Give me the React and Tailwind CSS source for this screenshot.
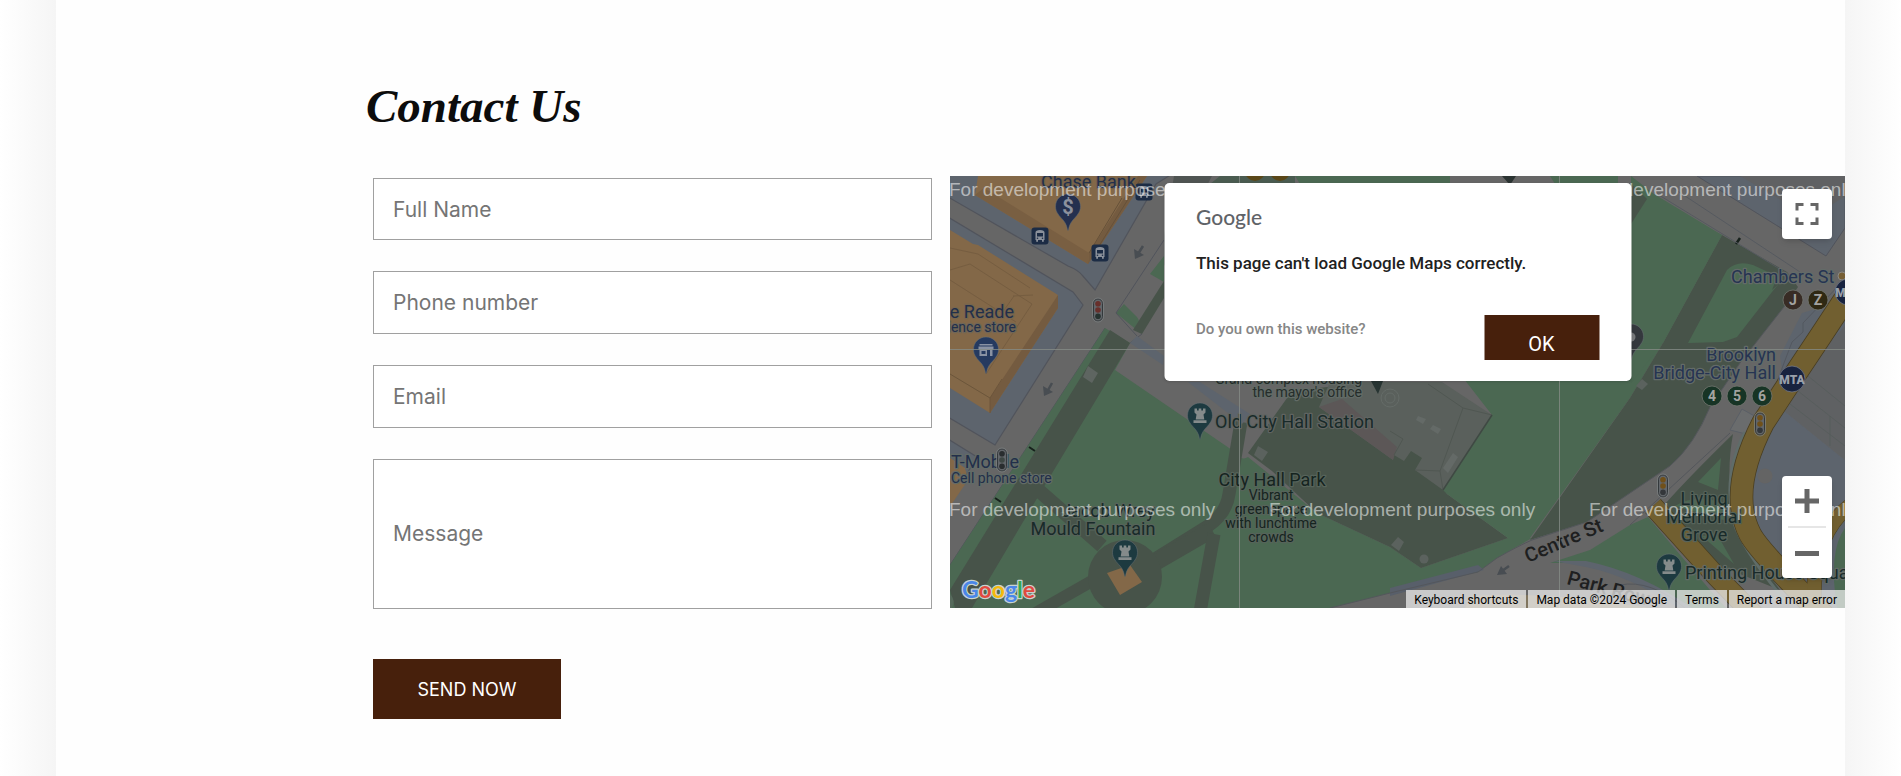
import React from "react";

const FIELD =
  "block w-full border border-[#a0a0a0] bg-white px-[19px] font-[Inter,sans-serif] text-[21px] text-[#333] placeholder:text-[#757575] outline-none focus:border-[#47200c]";

function Pin({ x, y, color, children }) {
  return (
    <g transform={`translate(${x} ${y})`}>
      <path
        d="M0-13C-7.2-13-12.5-7.4-12.5-.6-12.5 5.5-8.4 9-4.8 13.2-2.4 16-1 19.5-.6 22.6-.4 23.8.4 23.8.6 22.6 1 19.500 2.400 16 4.800 13.200 8.400 9 12.500 5.500 12.500-.6 12.500-7.400 7.200-13 0-13Z"
        fill={color}
        stroke="#6b7276"
        strokeWidth="0.5"
      />
      {children}
    </g>
  );
}

function Rook({ x, y }) {
  return (
    <Pin x={x} y={y} color="#1d3a40">
      <path
        d="M-5.500-7.500h2.500v2h1.700v-2h2.600v2H3v-2h2.500v4L3.500-1.500 4.300 3.500H-4.300L-3.500-1.500-5.500-3.500ZM-6.500 4.300h13v2.700h-13Z"
        fill="#848b8b"
      />
    </Pin>
  );
}

function Bus({ x, y }) {
  return (
    <g transform={`translate(${x} ${y})`}>
      <rect x="-8.500" y="-8.500" width="17" height="17" rx="3" fill="#1c2c45" />
      <path
        d="M-4.500-3.500Q-4.500-6 0-6T4.500-3.500V4H3.800V5.800H2V4H-2V5.800H-3.800V4H-4.500Z"
        fill="#8b919b"
      />
      <rect x="-3" y="-3" width="6" height="3.500" fill="#1c2c45" />
      <circle cx="-2.500" cy="2.200" r=".8" fill="#1c2c45" />
      <circle cx="2.500" cy="2.200" r=".8" fill="#1c2c45" />
    </g>
  );
}

function Signal({ x, y, colors }) {
  return (
    <g transform={`translate(${x} ${y})`}>
      <rect x="-4.500" y="-11" width="9" height="22" rx="4.500" fill="#62666a" stroke="#34393c" />
      <rect x="-5.500" y="-12" width="11" height="24" rx="5.500" fill="none" stroke="#7d8284" strokeWidth=".7" />
      {colors.map((c, i) => (
        <circle key={i} cx="0" cy={(i - 1) * 6.3} r="2.800" fill={c} />
      ))}
    </g>
  );
}

function Line({ x, y, color, label }) {
  return (
    <g>
      <circle cx={x} cy={y} r="10" fill={color} stroke="#71756f" strokeWidth=".8" />
      <text x={x} y={y + 5} textAnchor="middle" fontSize="14" fontWeight="700" fill="#a3a3a0">
        {label}
      </text>
    </g>
  );
}

function Mta({ x, y }) {
  return (
    <g>
      <circle cx={x} cy={y} r="13" fill="#18233f" stroke="#737985" strokeWidth=".8" />
      <text x={x} y={y + 5} textAnchor="middle" fontSize="12" fontWeight="900" fill="#9aa0ab">
        MTA
      </text>
    </g>
  );
}

function Label({ x, y, size = 18, color = "#1d2f36", halo = "#626b66", anchor = "start", children }) {
  return (
    <text
      x={x}
      y={y}
      fontSize={size}
      fill={color}
      stroke={halo}
      strokeWidth="2.500"
      strokeLinejoin="round"
      paintOrder="stroke"
      textAnchor={anchor}
    >
      {children}
    </text>
  );
}

const NAVY = "#222f4a";
const PARK = "#182a29";
const TRANSIT = "#263452";

function MapCanvas() {
  return (
    <svg
      className="absolute inset-0 h-full w-full font-[Roboto,sans-serif]"
      viewBox="0 0 895 432"
      preserveAspectRatio="xMinYMin slice"
      role="img"
      aria-label="Map of City Hall Park"
    >
      <rect width="895" height="432" fill="#666" />

      {/* city blocks on the west side */}
      <g stroke="#51545c" strokeWidth="1.200">
        <path d="M-2-2H222L206 8 145 114 132 99Q128 94 118 90L-2 21Z" fill="#5d646d" />
        <path d="M-2 41 123 116 133 129 45 269-2 241Z" fill="#5d646d" />
        <path d="M-2 263 27 281-2 329Z" fill="#5d646d" />
      </g>
      <path d="M28 0 25 19 138 88 197 0Z" fill="#836848" />
      <path d="M138 88 139 77 188 0H197Z" fill="#745b40" />
      <path d="M25 19 34 12 139 77 138 88Z" fill="#795f42" />
      <path d="M139 77 172 22 M144 78 190 4" stroke="#665139" fill="none" />
      <path d="M0 54 23 68 28 69 108 119V132L40 237 0 212Z" fill="#836848" />
      <path d="M108 119V132L40 237V222Z" fill="#745b40" />
      <path
        d="M0 72 28 78 80 112M0 94 20 88 82 128 36 198M0 104 66 146M83 119 63 120M64 120 50 140"
        stroke="#725a3f"
        strokeWidth=".8"
        fill="none"
      />
      <path d="M40 222 0 198M40 237V222L52 203" stroke="#6c553b" fill="none" />
      <path d="M-1 281 15 292 18 304-1 332Z" fill="#836848" />

      {/* northern strip */}
      <path d="M224 0H262L214 90V60Z" fill="#4f5452" />
      <path d="M345 0H500V8H350ZM600 0H668V8H605Z" fill="#4b6852" />
      <path d="M270 0H345V8H260Z" fill="#4a5b50" />
      <circle cx="305" cy="-5" r="10" fill="#5a4718" />
      <circle cx="330" cy="-5" r="10" fill="#5a4718" />
      <path d="M552 0H566L560 9Z" fill="#2b3332" />

      {/* tree strip and small lawns */}
      <path d="M214 80 200 98 214 106ZM174 128 166 137 188 155Q191 146 187 141Z" fill="#4b6852" />
      <path d="M214 105 183 154 192 158 214 122Z" fill="#475349" />
      <path d="M214 64 166 137M155 152 0 389M180 167 192 158M166 137 187 160" stroke="#51545c" fill="none" />
      <path d="M187 160 214 180 213 189 180 167Z" fill="#5d646d" />
      <path d="M155 152 180 167 165 194 282 274Q291 286 298 281L367 337 440 371 471 392 558 362H582L547 382 528 396 440 417 380 432H0V389Z" fill="#4b6852" />
      <path d="M160 154 180 167 152 214 92 314 22 432H5L0 414 123 214Z" fill="#475349" />
      <path d="M138 190 148 197 142 207 133 201Z" fill="#5e6561" />
      <path d="M79 271 85 275M45 322 51 326" stroke="#17211c" strokeWidth="2" />

      {/* park walks */}
      <g fill="none" stroke="#475349">
        <path d="M86 312 152 370" strokeWidth="14" />
        <path d="M205 383 258 350Q276 338 279 318L291 246" strokeWidth="13" />
        <path d="M205 387 262 354" strokeWidth="16" />
        <path d="M264 358 250 436" strokeWidth="13" />
        <path d="M142 405 84 438" strokeWidth="12" />
      </g>
      <circle cx="175" cy="401" r="37" fill="#475349" />
      <path d="M157 397 180 389 192 406 170 419Z" fill="#836848" />
      <path d="M0 418Q6 424 2 432H0Z" fill="#56695b" />
      <path d="M250 206 300 238 292 248 238 206Z" fill="#5d646d" />

      {/* city hall grounds */}
      <path d="M298 277 342 215 430 205 497 318 558 362 471 392 440 371 367 337 322 295Z" fill="#475349" />
      <path d="M500 185 680 30 700 24 772 59 713 167 680 222 580 362H558L497 318 493 314 542 239Z" fill="#4b6852" />
      <path d="M440 206H492L542 239 493 314 465 294 472 282 461 275 454 285 444 279 443 284 369 231 380 206Z" fill="#5a605c" />
      <path d="M369 231 392 223 447 271 443 284Z" fill="#5c5757" />
      <path d="M542 239 513 232 490 295 465 294M513 232 478 208M440 255 453 263 444 279M493 314 490 295" stroke="#505752" fill="none" />
      <path d="M542 239 493 314" stroke="#3f4943" strokeWidth="1.500" />
      <path d="M493 292 503 277 508 281 498 297ZM468 240 476 243 473 248 466 244ZM483 249 491 253 488 258 480 253Z" fill="#646a67" />
      <circle cx="440" cy="222" r="9" fill="none" stroke="#656c68" strokeWidth="1" />
      <circle cx="440" cy="222" r="5" fill="none" stroke="#656c68" />
      <path d="M308 270 318 276 312 285 304 279ZM448 361 454 366 449 375 441 369Z" fill="#5b625e" />
      <circle cx="474" cy="383" r="4.500" fill="#5b625e" />

      {/* east lawns */}
      <path d="M772 59 837 96 848 111 837 127 790 187 760 231Q742 272 720 290L680 317 637 346 580 364 680 222 713 167Z" fill="#475349" />
      <path d="M681 0 704 18 772 59 713 167 681 168Z" fill="#4b6852" />
      <path d="M681 8 692 18 697 23 681 48Z" fill="#475349" />
      <path d="M777 94Q787 84 803 89L833 103 822 116 787 161 773 166 738 167Z" fill="#4b6852" />
      <path d="M822 114 838 100 826 104Z" fill="#475349" />
      <path d="M681 178H704L681 207Z" fill="#4b6852" />
      <path d="M692 203 698 208 692 214 686 210Z" fill="#5b625e" />
      <path d="M786 68 790 62" stroke="#17211c" strokeWidth="2.500" />
      <path d="M704 16 846 103 M720 10 850 96" stroke="#565a60" fill="none" />

      {/* north-east blocks */}
      <path d="M747 0 876 80 895 52V0Z" fill="#5d646d" stroke="#51545c" />
      <path d="M790 0 862 42 895 20V0Z" fill="#606163" />
      <path d="M895 124 852 137 830 180 833 200 850 206 895 150Z" fill="#5d646d" />
      <path d="M893 105 853 147V156L842 166 834 187 824 214 795 258" stroke="#535860" fill="none" />

      {/* streets to the south-east */}
      <path d="M440 412 528 389 534 394 440 420Z" fill="#585f6a" />
      <path d="M380 432 440 417 528 396 547 382Q570 369 582 364L637 346 680 317 720 290Q745 268 760 231L790 187 837 127" fill="none" stroke="#54575c" />
      <path d="M600 387 640 374 680 349 698 341 760 414 776 432H740Q690 398 636 387Z" fill="#4b6852" />
      <path d="M603 385 636 385Q690 396 742 432H728Q680 400 636 391Z" fill="#5d646d" />
      <path d="M521 420Q600 415 700 432H515Z" fill="#80755e" />
      <path d="M670 409Q700 403 735 432M680 349 780 257" stroke="#54575c" fill="none" />
      <path d="M792 233 808 242 796 258 780 254Z" fill="#6a6c6d" stroke="#5a5f66" />

      {/* memorial grove */}
      <path d="M783 258Q775 300 785 352L830 414 770 390 715 328Q740 300 783 258Z" fill="#475349" />
      <path d="M748 306 771 282 768 314ZM725 330Q745 318 770 326L777 345ZM768 360 784 388 752 360Z" fill="#4b6852" />
      <path d="M795 256Q772 300 784 347 792 372 834 424" fill="none" stroke="#5f6c69" strokeWidth="3" />

      {/* plaza and avenues */}
      <path d="M833 234 895 284V432H860L815 374 803 340Q800 280 833 234Z" fill="#5d646d" />
      <path d="M845 205 895 150V284L833 234Z" fill="#5f6163" />
      <path d="M840 228 895 270M848 215 895 252M858 200 895 230M880 240V270" stroke="#545b5a" strokeWidth=".7" />
      <circle cx="815" cy="300" r="7.500" fill="#646464" />
      <path d="M895 352Q878 375 887 432H895Z" fill="#4b6852" />
      <g fill="none" strokeLinejoin="round">
        <g stroke="#493e22" strokeWidth="23.500">
          <path d="M905 108 870 161 842 203 813 247Q778 315 800 358 808 374 874 440" />
          <path d="M703 330 767 401 805 440" strokeWidth="21" />
          <path d="M902 328Q858 360 865 440" strokeWidth="15" />
        </g>
        <g stroke="#715f30" strokeWidth="22">
          <path d="M905 108 870 161 842 203 813 247Q778 315 800 358 808 374 874 440" />
          <path d="M703 330 767 401 805 440" strokeWidth="19.500" />
          <path d="M902 328Q858 360 865 440" strokeWidth="14" />
        </g>
      </g>

      {/* one-way arrows */}
      <g stroke="#484d52" strokeWidth="2.500" fill="none">
        <path d="M193 70 188 78M102 207 97 216M559 390 552 395" />
      </g>
      <path d="M184 73 185 83 194 79ZM93 210 94 220 103 216ZM551 390 547 399 557 398Z" fill="#484d52" />

      <Bus x={90} y={60} />
      <Bus x={150} y={77} />
      <Bus x={194} y={16} />
      <Pin x={118} y={31} color="#24304f">
        <text y="7" textAnchor="middle" fontSize="20" fontWeight="700" fill="#8c919d">$</text>
      </Pin>
      <Pin x={36} y={174} color="#253a60">
        <path d="M-6.500-6h13v1.500h-13ZM-7.500-3.500h15v3h-1V6H4V0H1V6H-6.500V-.5h-1ZM-4.500 1v3h4V1Z" fill="#8992a3" fillRule="evenodd" />
      </Pin>
      <Rook x={175} y={377} />
      <Rook x={250} y={240} />
      <Rook x={719} y={391} />
      <Pin x={681} y={161} color="#34383d">
        <circle r="4.500" fill="#77797b" />
      </Pin>
      <path d="M421 205H433L428 218Z" fill="#273432" />

      <Label x={91} y={12} color={NAVY} halo="#74624c">Chase Bank</Label>
      <Label x={64} y={142} color={NAVY} halo="#77664f" anchor="end">Duane Reade</Label>
      <Label x={66} y={156} size={14} color={NAVY} halo="#6f6658" anchor="end">Convenience store</Label>
      <Label x={1} y={292} color={NAVY}>T-Mobile</Label>
      <Label x={1} y={307} size={14} color={NAVY}>Cell phone store</Label>
      <Label x={158} y={341} color={PARK} halo="#56635a" anchor="middle">Jacob Wrey</Label>
      <Label x={143} y={359} color={PARK} halo="#56635a" anchor="middle">Mould Fountain</Label>
      <Label x={265} y={252} color={PARK} halo="#606461">Old City Hall Station</Label>
      <Label x={412} y={208} size={14} color="#252d2b" anchor="end">Grand complex housing</Label>
      <Label x={412} y={221} size={14} color="#252d2b" anchor="end">the mayor's office</Label>
      <Label x={322} y={310} color="#152420" halo="#56635a" anchor="middle">City Hall Park</Label>
      {["Vibrant", "greenspace", "with lunchtime", "crowds"].map((t, i) => (
        <Label key={t} x={321} y={324 + i * 14} size={14} color="#152420" halo="#56635a" anchor="middle">
          {t}
        </Label>
      ))}
      <Label x={781} y={107} color={TRANSIT} halo="#636b68">Chambers St</Label>
      <Label x={826} y={185} color={TRANSIT} halo="#636b68" anchor="end">Brooklyn</Label>
      <Label x={826} y={203} color={TRANSIT} halo="#636b68" anchor="end">Bridge-City Hall</Label>
      {["Living", "Memorial", "Grove"].map((t, i) => (
        <Label key={t} x={754} y={329 + i * 18} color={PARK} halo="#56635a" anchor="middle">
          {t}
        </Label>
      ))}
      <Label x={735} y={403} color={PARK}>Printing House Square</Label>
      <g fontSize="20" fontWeight="500" fill="#1e1f20">
        <text transform="translate(578 387) rotate(-23)">Centre St</text>
        <text transform="translate(616 408) rotate(15)">Park Row</text>
      </g>

      <Line x={843} y={124} color="#382c25" label="J" />
      <Line x={868} y={124} color="#2f2913" label="Z" />
      <Line x={762} y={220} color="#173425" label="4" />
      <Line x={787} y={220} color="#173425" label="5" />
      <Line x={812} y={220} color="#173425" label="6" />
      <circle cx="892" cy="100" r="4" fill="#765e34" stroke="#8a8984" />
      <Mta x={842} y={203} />
      <Mta x={898} y={116} />
      <Signal x={148} y={134} colors={["#682f2b", "#682f2b", "#26322f"]} />
      <Signal x={52} y={284} colors={["#292d2f", "#3e4744", "#292d2f"]} />
      <Signal x={713} y={310} colors={["#705019", "#705019", "#34373a"]} />
      <Signal x={810} y={248} colors={["#705019", "#705019", "#34373a"]} />

      {/* tile seams and watermark */}
      <path d="M289.500 0V432M609.500 0V432M0 173.500H895" stroke="#858b87" strokeWidth=".8" />
      <g fontFamily="'Liberation Sans', Arial, sans-serif" fontSize="19" fill="#fff" fillOpacity=".55">
        {[20, 340].map((y) =>
          [-1, 319, 639].map((x) => (
            <text key={`${x}-${y}`} x={x} y={y}>
              For development purposes only
            </text>
          ))
        )}
      </g>
    </svg>
  );
}

const LOGO = [
  ["G", "#4a86e8"],
  ["o", "#e04a3f"],
  ["o", "#f4b90b"],
  ["g", "#4a86e8"],
  ["l", "#34a853"],
  ["e", "#e04a3f"],
];

function ErrorDialog() {
  return (
    <div
      role="dialog"
      aria-label="Google Maps error"
      className="absolute left-1/2 top-[7px] flex h-[198px] w-[467px] -translate-x-1/2 flex-col rounded-[5px] bg-white px-8 pt-5 font-[Roboto,sans-serif] shadow"
    >
      <div className="font-[Lato,sans-serif] text-[21px] font-medium leading-7 text-[#5f6368]">Google</div>
      <p className="mt-5 text-[17px] font-medium leading-6 text-[#212121]">
        This page can't load Google Maps correctly.
      </p>
      <div className="mt-10 flex items-start justify-between">
        <a href="#own" className="text-[15px] font-medium leading-7 text-[#868686]">
          Do you own this website?
        </a>
        <button type="button" className="h-[45px] w-[115px] bg-[#47200c] pt-3 text-[20px] leading-8 text-white">
          OK
        </button>
      </div>
    </div>
  );
}

function MapPanel() {
  return (
    <section aria-label="Map" className="relative mt-[-2px] h-[432px] overflow-hidden bg-[#666]">
      <MapCanvas />
      <a href="#maps" aria-label="Google" className="absolute bottom-0 left-2.5">
        <svg width="84" height="36" viewBox="0 0 84 36">
          <text
            x="2"
            y="26"
            fontFamily="Lato, sans-serif"
            fontSize="23"
            fontWeight="700"
            stroke="#c7d3d0"
            strokeWidth="2.500"
            paintOrder="stroke"
            strokeLinejoin="round"
          >
            {LOGO.map(([c, fill], i) => (
              <tspan key={i} fill={fill}>
                {c}
              </tspan>
            ))}
          </text>
        </svg>
      </a>
      <button
        type="button"
        aria-label="Toggle fullscreen view"
        className="absolute right-[13px] top-[13px] flex size-[50px] items-center justify-center rounded-sm bg-white shadow-md"
      >
        <svg width="24" height="22" viewBox="0 0 24 22" fill="none" stroke="#666" strokeWidth="3">
          <path d="M2 7.500V1.500H8.500M15.500 1.500H22V7.500M22 14.500V20.500H15.500M8.500 20.500H2V14.500" />
        </svg>
      </button>
      <div className="absolute bottom-[30px] right-[13px] flex h-[102px] w-[50px] flex-col items-center rounded-sm bg-white shadow-md">
        <button type="button" aria-label="Zoom in" className="flex w-full flex-1 items-center justify-center">
          <svg width="24" height="24" viewBox="0 0 24 24" fill="#666">
            <path d="M9.500 0H14.500V9.500H24V14.500H14.500V24H9.500V14.500H0V9.500H9.500Z" />
          </svg>
        </button>
        <div className="h-0.5 w-[38px] bg-[#e6e6e6]" />
        <button type="button" aria-label="Zoom out" className="flex w-full flex-1 items-center justify-center">
          <svg width="24" height="5" viewBox="0 0 24 5" fill="#666">
            <path d="M0 0H24V5H0Z" />
          </svg>
        </button>
      </div>
      <div className="absolute bottom-0 right-0 flex h-[18px] gap-[2px] font-[Roboto,sans-serif] text-[12px] leading-5 text-black">
        <button type="button" className="bg-[#f5f5f5]/70 px-2">Keyboard shortcuts</button>
        <span className="bg-[#f5f5f5]/70 px-2">Map data ©2024 Google</span>
        <a href="#terms" className="bg-[#f5f5f5]/70 px-2">Terms</a>
        <a href="#report" className="bg-[#f5f5f5]/70 px-2">Report a map error</a>
      </div>
      <ErrorDialog />
    </section>
  );
}

export default function App() {
  return (
    <div className="flex min-h-screen bg-white">
      <div className="w-14 shrink-0 bg-linear-to-r from-white to-[#f5f5f5]" />
      <main className="min-w-0 flex-1 bg-[#fefefe] pb-14 pt-[72px]">
        <h1 className="pl-[310px] font-['Liberation_Serif',serif] text-[47px] font-bold italic leading-[68px] text-[#0c0c0c]">
          Contact Us
        </h1>
        <div className="mt-[38px] grid grid-cols-[559fr_895fr] gap-[18px] pl-[317px]">
          <form onSubmit={(e) => e.preventDefault()}>
            <div className="flex flex-col gap-[31px]">
              <input aria-label="Full Name" type="text" placeholder="Full Name" className={`${FIELD} h-[62px]`} />
              <input aria-label="Phone number" type="tel" placeholder="Phone number" className={`${FIELD} h-[63px]`} />
              <input aria-label="Email" type="email" placeholder="Email" className={`${FIELD} h-[63px]`} />
              <textarea
                aria-label="Message"
                placeholder="Message"
                className={`${FIELD} h-[150px] resize-none pt-[58px] leading-8`}
              />
            </div>
            <button
              type="submit"
              className="mt-[50px] h-[60px] w-[188px] bg-[#47200c] font-[Inter,sans-serif] text-[18px] text-white"
            >
              SEND NOW
            </button>
          </form>
          <MapPanel />
        </div>
      </main>
      <div className="w-14 shrink-0 bg-linear-to-l from-white to-[#f5f5f5]" />
    </div>
  );
}
